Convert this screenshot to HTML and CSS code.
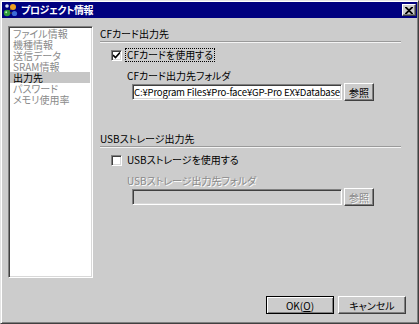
FILE: index.html
```html
<!DOCTYPE html>
<html lang="ja">
<head>
    <meta charset="UTF-8">
    <title>プロジェクト情報</title>
    <link rel="stylesheet" href="styles.css">
</head>
<body>
<div class="window">

    <!-- タイトルバー -->
    <div class="titlebar">
        <svg class="app-icon" width="15" height="14" viewBox="0 0 15 14">
            <line x1="4" y1="10" x2="10" y2="4" stroke="#6a4a20" stroke-width="1"/>
            <line x1="4" y1="10" x2="11" y2="10" stroke="#6a4a20" stroke-width="1"/>
            <circle cx="10" cy="4" r="3" fill="#f0a020"/>
            <circle cx="4" cy="10" r="3.2" fill="#2f9a3a"/>
            <circle cx="11.5" cy="10.5" r="2.6" fill="#3a6ad8"/>
            <circle cx="4" cy="3" r="1.8" fill="#d8e0f0"/>
            <circle cx="3.2" cy="9.2" r="1" fill="#b8f0b0"/>
        </svg>
        <span class="title">プロジェクト情報</span>
        <button class="close">
            <svg width="8" height="7" viewBox="0 0 8 7">
                <path d="M0 0 L7 7 M1 0 L8 7 M7 0 L0 7 M8 0 L1 7" stroke="#000" stroke-width="1.2"/>
            </svg>
        </button>
    </div>

    <div class="main">
        <!-- 左側のリスト -->
        <ul class="nav">
            <li>ファイル情報</li>
            <li>機種情報</li>
            <li>送信データ</li>
            <li>SRAM情報</li>
            <li class="active">出力先</li>
            <li>パスワード</li>
            <li>メモリ使用率</li>
        </ul>

        <div class="content">
            <!-- CFカード -->
            <div class="group-head">
                <span>CFカード出力先</span>
                <div class="etched"></div>
            </div>
            <div class="check-row">
                <span class="check">
                    <svg width="7" height="7" viewBox="0 0 7 7"><path d="M0 3 L2.5 5.5 L7 0.5" fill="none" stroke="#000" stroke-width="1.6"/></svg>
                </span>
                <span class="check-label focused">CFカードを使用する</span>
            </div>
            <div class="field-label">CFカード出力先フォルダ</div>
            <div class="field-row">
                <input class="path" type="text" value="C:¥Program Files¥Pro-face¥GP-Pro EX¥Database">
                <button class="btn browse">参照</button>
            </div>

            <!-- USBストレージ -->
            <div class="group-head usb">
                <span>USBストレージ出力先</span>
                <div class="etched"></div>
            </div>
            <div class="check-row">
                <span class="check"></span>
                <span class="check-label">USBストレージを使用する</span>
            </div>
            <div class="field-label disabled">USBストレージ出力先フォルダ</div>
            <div class="field-row">
                <input class="path" type="text" value="" disabled>
                <button class="btn browse" disabled>参照</button>
            </div>
        </div>
    </div>

    <div class="footer">
        <button class="btn wide default">OK(<u>O</u>)</button>
        <button class="btn wide">キャンセル</button>
    </div>
</div>
</body>
</html>
```

FILE: styles.css
```css
body {
    margin: 0;
    background: #cccccc;
    font-family: "Noto Sans CJK JP", sans-serif;
    font-size: 10px;
    font-feature-settings: "palt";
    color: #000;
}
.window {
    width: 419px;
    height: 324px;
    box-sizing: border-box;
    display: flex;
    flex-direction: column;
    padding: 1px;
    background: #cccccc;
    border: 1px solid;
    border-color: #e4e4e4 #404040 #404040 #e4e4e4;
    box-shadow: inset 1px 1px #fff, inset -1px -1px #808080;
}
.titlebar {
    height: 16px;
    background: #00007f;
    display: flex;
    align-items: center;
    padding-left: 1px;
}
.app-icon {
    flex: none;
}
.title {
    margin-left: 3px;
    color: #fff;
    font-weight: bold;
    font-size: 10px;
    letter-spacing: -0.4px;
    line-height: 16px;
}
.close {
    margin-left: auto;
    margin-right: 1px;
    width: 14px;
    height: 12px;
    padding: 0;
    display: flex;
    align-items: center;
    justify-content: center;
    background: #cccccc;
    border: 1px solid;
    border-color: #fff #404040 #404040 #fff;
    box-shadow: inset -1px -1px #808080;
}
.main {
    display: flex;
    padding: 8px 0 0 6px;
}
.nav {
    list-style: none;
    margin: 0;
    padding: 0;
    width: 85px;
    height: 252px;
    box-sizing: border-box;
    background: #fff;
    border: 1px solid;
    border-color: #808080 #fff #fff #808080;
    box-shadow: inset 1px 1px #404040, inset -1px -1px #d8d8d8;
    padding-top: 1px;
}
.nav li {
    height: 11px;
    line-height: 11px;
    padding-left: 3px;
    margin: 0 2px 0 1px;
    color: #8a8a8a;
    white-space: nowrap;
}
.nav li.active {
    color: #000;
    background: #c6c6c6;
}
.content {
    margin-left: 7px;
    width: 301px;
    padding-top: 1px;
}
.group-head span {
    display: block;
    line-height: 13px;
}
.etched {
    margin-top: 1px;
    height: 0;
    border-top: 1px solid #9a9a9a;
    border-bottom: 1px solid #f4f4f4;
}
.group-head.usb {
    margin-top: 31px;
}
.check-row {
    display: flex;
    align-items: center;
    height: 14px;
    margin-top: 5px;
    padding-left: 11px;
}
.check {
    width: 11px;
    height: 11px;
    box-sizing: border-box;
    display: flex;
    align-items: center;
    justify-content: center;
    background: #fff;
    border: 1px solid;
    border-color: #808080 #fff #fff #808080;
    box-shadow: inset 1px 1px #404040, inset -1px -1px #d8d8d8;
}
.check-label {
    margin-left: 3px;
    padding: 0 1px;
    line-height: 12px;
    border: 1px dotted transparent;
}
.check-label.focused {
    border-color: #000;
}
.field-label {
    margin-top: 7px;
    padding-left: 27px;
    line-height: 13px;
}
.disabled, .btn:disabled {
    color: #8a8a8a;
    text-shadow: 1px 1px #fff;
}
.field-row {
    display: flex;
    align-items: center;
    margin-top: 1px;
    padding-left: 32px;
}
.path {
    width: 210px;
    height: 16px;
    box-sizing: border-box;
    margin: 0;
    padding: 0 1px;
    font-family: "Noto Sans CJK JP", sans-serif;
    font-size: 9.6px;
    letter-spacing: -0.2px;
    background: #fff;
    border: 1px solid;
    border-color: #808080 #fff #fff #808080;
    box-shadow: inset 1px 1px #404040, inset -1px -1px #d8d8d8;
    outline: none;
}
.path:disabled {
    background: #cccccc;
}
.btn {
    font-family: "Noto Sans CJK JP", sans-serif;
    font-size: 10px;
    font-feature-settings: "palt";
    color: #000;
    background: #cccccc;
    padding: 0;
    border: 1px solid;
    border-color: #fff #404040 #404040 #fff;
    box-shadow: inset -1px -1px #808080;
}
.browse {
    width: 30px;
    height: 18px;
    margin-left: 2px;
}
.footer {
    margin-top: auto;
    display: flex;
    justify-content: flex-end;
    gap: 4px;
    padding: 0 11px 8px 0;
}
.wide {
    width: 68px;
    height: 18px;
}
.default {
    border-color: #000;
    box-shadow: inset 1px 1px #fff, inset -1px -1px #808080;
}
.default u {
    text-underline-offset: 1px;
}
```
